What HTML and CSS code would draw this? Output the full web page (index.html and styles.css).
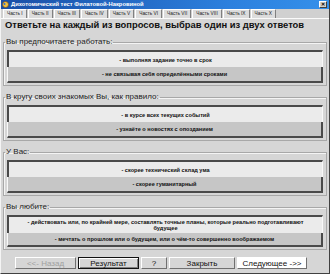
FILE: index.html
```html
<!DOCTYPE html>
<html lang="ru">
  <head>
    <meta charset="utf-8">
    <title>Дихотомический тест Филатовой-Накровиной</title>
    <link rel="stylesheet" href="styles.css">
  </head>
  <body>
    <div class="window">
      <div class="titlebar">
        <svg class="app-icon" width="7" height="7" viewBox="0 0 7 7">
          <circle cx="3.5" cy="3.5" r="3" fill="#f0c040" stroke="#704010" stroke-width="0.6"/>
          <circle cx="2.5" cy="3" r="1" fill="#3070d0"/>
        </svg>
        <span class="title">Дихотомический тест Филатовой-Накровиной</span>
        <span class="close">&#x2715;</span>
      </div>

      <div class="tabs">
        <span class="tab active">Часть I</span>
        <span class="tab">Часть II</span>
        <span class="tab">Часть III</span>
        <span class="tab">Часть IV</span>
        <span class="tab">Часть V</span>
        <span class="tab">Часть VI</span>
        <span class="tab">Часть VII</span>
        <span class="tab">Часть VIII</span>
        <span class="tab">Часть IX</span>
        <span class="tab">Часть X</span>
      </div>

      <div class="content">
        <h1 class="heading">Ответьте на каждый из вопросов, выбрав один из двух ответов</h1>

        <fieldset class="group">
          <legend>Вы предпочитаете работать:</legend>
          <div class="answer first">- выполняя задание точно в срок</div>
          <div class="answer second">- не связывая себя определёнными сроками</div>
        </fieldset>

        <fieldset class="group">
          <legend>В кругу своих знакомых Вы, как правило:</legend>
          <div class="answer first">- в курсе всех текущих событий</div>
          <div class="answer second">- узнаёте о новостях с опозданием</div>
        </fieldset>

        <fieldset class="group">
          <legend>У Вас:</legend>
          <div class="answer first">- скорее технический склад ума</div>
          <div class="answer second">- скорее гуманитарный</div>
        </fieldset>

        <fieldset class="group">
          <legend>Вы любите:</legend>
          <div class="answer first tall">- действовать или, по крайней мере, составлять точные планы, которые реально подготавливают будущее</div>
          <div class="answer second short">- мечтать о прошлом или о будущем, или о чём-то совершенно воображаемом</div>
        </fieldset>

        <div class="nav">
          <span class="btn back">&lt;&lt;- Назад</span>
          <span class="btn result">Результат</span>
          <span class="btn help">?</span>
          <span class="btn close-btn">Закрыть</span>
          <span class="btn next">Следующее -&gt;&gt;</span>
        </div>
      </div>
    </div>
  </body>
</html>
```

FILE: styles.css
```css
html, body {
  margin: 0;
  padding: 0;
}
body {
  width: 330px;
  height: 274px;
  overflow: hidden;
  background: #d6d6d6;
  font-family: "Liberation Sans", Arial, sans-serif;
  color: #111;
}
.window {
  height: 274px;
  box-sizing: border-box;
  display: flex;
  flex-direction: column;
  border-left: 1px solid #f4f4f4;
  border-bottom: 1px solid #404040;
  border-right: 1px solid #404040;
}

/* title bar */
.titlebar {
  height: 10px;
  display: flex;
  align-items: center;
  padding: 0 2px 0 1px;
  background: linear-gradient(to right, #1a4fa6, #2c80de 70%, #3590ea);
}
.app-icon {
  flex-shrink: 0;
  margin-right: 2px;
}
.title {
  flex-grow: 1;
  color: #fff;
  font-size: 5.8px;
  font-weight: bold;
  white-space: nowrap;
}
.close {
  width: 8px;
  height: 7px;
  box-sizing: border-box;
  display: flex;
  align-items: center;
  justify-content: center;
  background: #d4d0c8;
  border: 1px solid;
  border-color: #fff #404040 #404040 #fff;
  font-size: 5px;
  font-weight: bold;
  color: #000;
}

/* tabs */
.tabs {
  height: 11px;
  display: flex;
  align-items: flex-end;
  gap: 1px;
  padding: 0 2px;
  border-bottom: 1px solid #fafafa;
  background: #d0d0d0;
}
.tab {
  height: 8px;
  line-height: 8px;
  padding: 0 3px;
  font-size: 4.8px;
  color: #222;
  background: #dcdcdc;
  border: 1px solid;
  border-color: #fff #808080 transparent #fff;
  border-bottom: 0;
  white-space: nowrap;
}
.tab.active {
  background: #e4e4e4;
}

/* main area */
.content {
  flex-grow: 1;
  display: flex;
  flex-direction: column;
}
.heading {
  margin: 0 0 7px;
  padding: 0 4px;
  height: 12px;
  line-height: 12px;
  font-size: 9.4px;
  font-weight: bold;
  white-space: nowrap;
  color: #111;
}
.group {
  margin: 0 2px 7px;
  padding: 4px 3px 2px;
  border: 1px solid #a8a8a8;
  box-shadow: inset 1px 1px 0 #f4f4f4;
  min-width: 0;
}
.group legend {
  padding: 0 1px;
  margin-left: -2px;
  height: 8px;
  line-height: 8px;
  font-size: 8px;
  color: #222;
}
.answer {
  display: flex;
  align-items: center;
  justify-content: center;
  text-align: center;
  box-sizing: border-box;
  font-size: 5.6px;
  font-weight: bold;
  line-height: 6px;
  padding: 0 12px;
}
.answer.first {
  height: 17px;
  background: #ebebeb;
  border-top: 2px solid #4a4a4a;
  border-left: 2px solid #4a4a4a;
  border-right: 1px solid #f8f8f8;
}
.answer.second {
  height: 16px;
  background: #c6c6c6;
  border-right: 2px solid #4a4a4a;
  border-bottom: 2px solid #4a4a4a;
  border-left: 1px solid #f8f8f8;
}
.answer.tall {
  height: 18px;
}
.answer.short {
  height: 14px;
}

/* bottom buttons */
.nav {
  display: flex;
  gap: 2px;
  padding: 0 0 0 14px;
  margin-top: auto;
  margin-bottom: 4px;
}
.btn {
  height: 12px;
  box-sizing: border-box;
  display: flex;
  align-items: center;
  justify-content: center;
  font-size: 8px;
  color: #111;
  background: #d6d6d6;
  border: 1px solid;
  border-color: #fff #707070 #707070 #fff;
}
.back {
  width: 61px;
  color: #a0a0a0;
}
.result {
  width: 61px;
  border: 1px solid #111;
  box-shadow: inset 1px 1px 0 #fff, inset -1px -1px 0 #808080;
}
.help {
  width: 26px;
}
.close-btn {
  width: 66px;
}
.next {
  width: 70px;
  background: #fff;
}
```
